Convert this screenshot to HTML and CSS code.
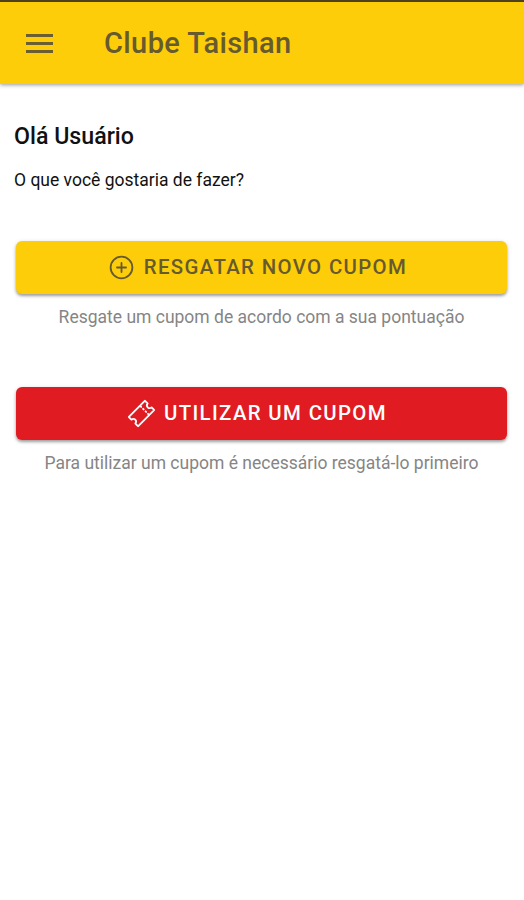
FILE: index.html
```html
<!DOCTYPE html>
<html lang="pt-BR">
<head>
  <meta charset="UTF-8" />
  <meta name="viewport" content="width=device-width, initial-scale=1" />
  <title>Clube Taishan</title>
  <link rel="stylesheet" href="styles.css">
</head>
<body>

  <!-- Barra superior -->
  <header class="toolbar">
    <button class="menu-btn" aria-label="Menu">
      <span></span>
      <span></span>
      <span></span>
    </button>
    <h1 class="title">Clube Taishan</h1>
  </header>

  <main class="content">
    <h2 class="greeting">Olá Usuário</h2>
    <p class="question">O que você gostaria de fazer?</p>

    <!-- Resgatar -->
    <section class="action">
      <button class="btn btn-primary">
        <svg class="icon" viewBox="0 0 512 512">
          <circle cx="256" cy="256" r="192" />
          <path d="M256 176v160M336 256H176" />
        </svg>
        <span>RESGATAR NOVO CUPOM</span>
      </button>
      <p class="hint">Resgate um cupom de acordo com a sua pontuação</p>
    </section>

    <!-- Utilizar -->
    <section class="action">
      <button class="btn btn-danger">
        <svg class="icon" viewBox="0 0 512 512">
          <path d="M366.05 146a46.7 46.7 0 01-2.42-63.42 3.87 3.87 0 00-.22-5.26l-44.13-44.18a3.89 3.89 0 00-5.5 0l-70.34 70.34a23.62 23.62 0 00-5.71 9.24 23.66 23.66 0 01-14.95 15 23.7 23.7 0 00-9.25 5.71L33.14 313.78a3.89 3.89 0 000 5.5l44.13 44.13a3.87 3.87 0 005.26.22 46.69 46.69 0 0165.84 65.84 3.87 3.87 0 00.22 5.26l44.13 44.13a3.89 3.89 0 005.5 0l180.4-180.39a23.7 23.7 0 005.71-9.25 23.66 23.66 0 0114.95-15 23.62 23.62 0 009.24-5.71l70.34-70.34a3.89 3.89 0 000-5.5l-44.13-44.13a3.87 3.87 0 00-5.26-.22 46.7 46.7 0 01-63.48-2.21z" />
          <path d="M250.5 140.44l-16.51-16.51M294.52 184.46l-11-11M338.54 228.49l-11-11M388.07 278.01l-16.51-16.51" />
        </svg>
        <span>UTILIZAR UM CUPOM</span>
      </button>
      <p class="hint">Para utilizar um cupom é necessário resgatá-lo primeiro</p>
    </section>
  </main>

</body>
</html>
```

FILE: styles.css
```css
* {
  box-sizing: border-box;
}
body {
  margin: 0;
  min-height: 100vh;
  background: #fff;
  color: #111;
  font-family: Roboto, "Liberation Sans", sans-serif;
}
h1, h2, p {
  margin: 0;
}
button {
  border: 0;
  font-family: inherit;
  cursor: pointer;
}

/* Barra superior */
.toolbar {
  display: flex;
  align-items: center;
  height: 84px;
  border-top: 2px solid #4d421f;
  padding: 0 26px;
  background: #fdcd0a;
  color: #665a2f;
  box-shadow: 0 1px 4px rgba(0, 0, 0, 0.4);
}
.menu-btn {
  display: flex;
  flex-direction: column;
  gap: 5px;
  width: 27px;
  margin-right: 51px;
  padding: 0;
  background: none;
}
.menu-btn span {
  height: 3px;
  background: #6b5e31;
}
.title {
  font-size: 29px;
  font-weight: 500;
  line-height: 36px;
  letter-spacing: 0.4px;
}

/* Conteúdo */
.content {
  padding: 37px 17px 0 16px;
}
.greeting {
  margin-left: -2px;
  font-size: 23.2px;
  font-weight: 500;
  line-height: 30px;
}
.question {
  margin: 18px 0 50px -2px;
  font-size: 17.5px;
  line-height: 22px;
}

/* Botões */
.action {
  margin-bottom: 57px;
}
.btn {
  display: flex;
  align-items: center;
  justify-content: center;
  width: 100%;
  height: 53px;
  padding: 0 0 1px;
  border-radius: 6px;
  font-size: 20.4px;
  font-weight: 500;
  letter-spacing: 1.35px;
  box-shadow: 0 2px 3px rgba(0, 0, 0, 0.32), 0 1px 5px rgba(0, 0, 0, 0.12);
}
.btn-primary {
  background: #fdcd0a;
  color: #665a2f;
}
.btn-danger {
  background: #e01b22;
  color: #fff;
}
.icon {
  width: 29px;
  height: 29px;
  margin: 0 8px 0 -9px;
  fill: none;
  stroke: currentColor;
  stroke-width: 32;
  stroke-linecap: round;
  stroke-linejoin: round;
}
.hint {
  margin-top: 11px;
  color: #858585;
  font-size: 17.5px;
  line-height: 25px;
  text-align: center;
}
```
